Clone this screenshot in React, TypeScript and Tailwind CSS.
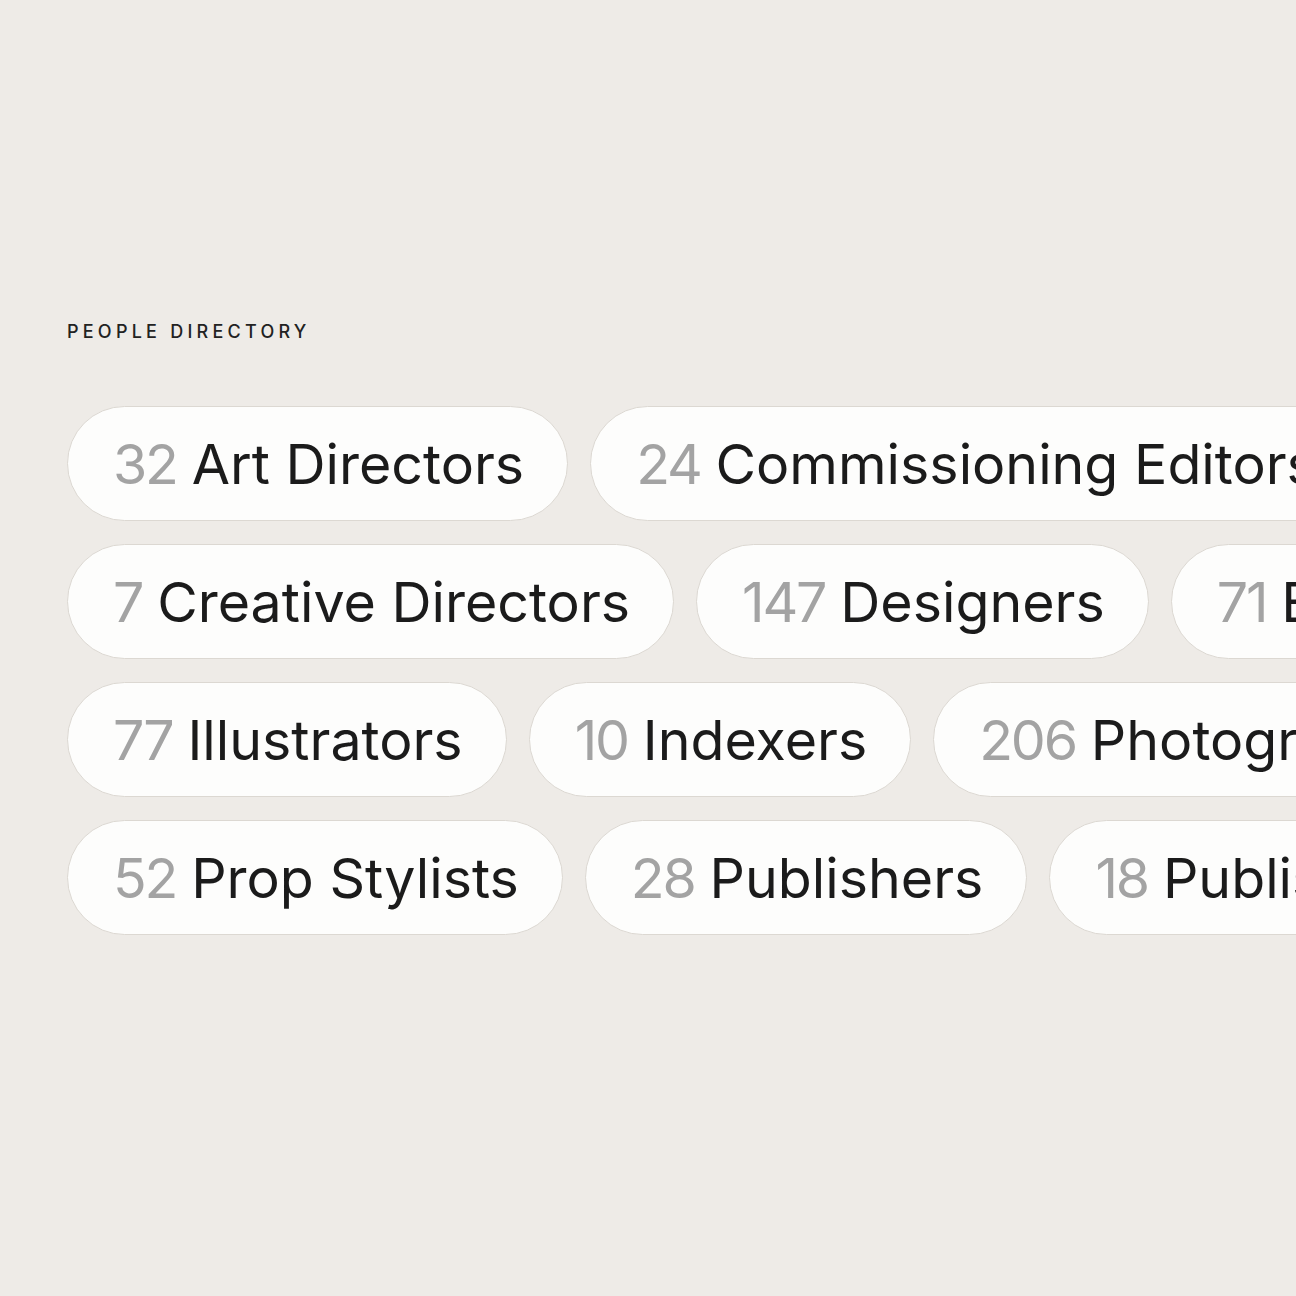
import React from 'react';

const rows: [string, string][][] = [
  [['32', 'Art Directors'], ['24', 'Commissioning Editors']],
  [['7', 'Creative Directors'], ['147', 'Designers'], ['71', 'Editors']],
  [['77', 'Illustrators'], ['10', 'Indexers'], ['206', 'Photographers']],
  [['52', 'Prop Stylists'], ['28', 'Publishers'], ['18', 'Publishing Assistants']],
];

const App: React.FC = () => {
  return (
    <div
      className="w-[1296px] h-[1296px] overflow-hidden bg-[#eeebe7] text-[#1b1b1b]"
      style={{ fontFamily: 'Inter, "Open Sans", sans-serif' }}
    >
      <div className="pl-[67px] pt-[319px]">
        <h1 className="text-[18px] font-medium tracking-[0.235em] leading-[26px] text-[#222]">
          PEOPLE DIRECTORY
        </h1>
        <div className="mt-[61px] flex flex-col gap-[23px]">
          {rows.map((row, i) => (
            <div key={i} className="flex gap-[22px] whitespace-nowrap">
              {row.map(([count, label]) => (
                <div
                  key={label}
                  className="shrink-0 h-[115px] flex items-center pl-[45px] pr-[43px] rounded-full bg-[#fdfdfc] border border-[#dcd8d2] text-[55.5px]"
                >
                  <span className="text-[#a3a3a3] tracking-[-0.04em] mr-[15px]">{count}</span>
                  <span>{label}</span>
                </div>
              ))}
            </div>
          ))}
        </div>
      </div>
    </div>
  );
};

export default App;
